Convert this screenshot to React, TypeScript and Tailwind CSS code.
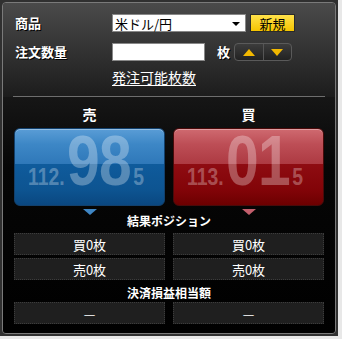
import React from "react";

const JP = { fontFamily: '"Noto Sans CJK JP", "Liberation Sans", sans-serif' };
const NUM = { fontFamily: '"Liberation Sans", Arial, sans-serif' };

function PriceButton({ pre, big, post, side }: { pre: string; big: string; post: string; side: "sell" | "buy" }) {
  const bg =
    side === "sell"
      ? "border-[#12406c] bg-[linear-gradient(to_bottom,#5a9dd6_0%,#3d87c6_20%,#2f78b9_46%,#0f5b9c_46%,#0d5491_80%,#0a4780_100%)]"
      : "border-[#4a0a0a] bg-[linear-gradient(to_bottom,#cf6a70_0%,#bd4e56_20%,#ad3a42_46%,#8f0c12_46%,#820408_80%,#6c0000_100%)]";
  return (
    <div className={`h-[78px] rounded-[6px] border flex justify-center items-start pt-[1px] overflow-hidden shadow-[inset_0_1px_0_rgba(255,255,255,0.35)] ${bg}`}>
      <div className="flex items-baseline scale-x-[0.84] -translate-x-[3px] font-bold text-white/30 leading-none" style={NUM}>
        <span className="text-[23px]">{pre}</span>
        <span className="text-[70px] leading-[0.9] tracking-[-1px] mx-[3px]">{big}</span>
        <span className="text-[23px]">{post}</span>
      </div>
    </div>
  );
}

function ValueBox({ children }: { children: React.ReactNode }) {
  return (
    <div className="h-[22px] bg-[#1f1f1f] border border-dotted border-[#3c3c3c] flex items-center justify-center text-white text-[13px] leading-none">
      {children}
    </div>
  );
}

export default function App() {
  return (
    <div className="w-[342px] h-[339px] bg-[#e8e8e8]" style={JP}>
      <div className="w-[338px] h-[336px] bg-[#303030] p-[2px]">
        <div className="h-full rounded-[4px] border border-[#7a7a7a] overflow-hidden flex flex-col">
          {/* 注文入力エリア */}
          <div className="bg-[linear-gradient(to_bottom,#4a4a4a,#1c1c1c)] pt-[11px]">
            <div className="flex items-center h-[18px]">
              <div className="w-[109px] pl-[12px] text-white text-[13px] font-bold [text-shadow:1px_1px_0_#000]">商品</div>
              <div className="w-[134px] h-[18px] bg-white border border-[#888] flex items-center justify-between pl-[2px] pr-[5px]">
                <span className="text-black text-[13px] leading-none">米ドル/円</span>
                <span className="w-0 h-0 border-l-[4px] border-r-[4px] border-t-[4px] border-l-transparent border-r-transparent border-t-black mt-[2px]" />
              </div>
              <div className="ml-[4px] w-[45px] h-[18px] bg-[linear-gradient(to_bottom,#ffe14a,#f5c400)] border border-[#2a2a2a] flex items-center justify-center text-black text-[13px] leading-none">
                新規
              </div>
            </div>
            <div className="flex items-center h-[18px] mt-[11px]">
              <div className="w-[109px] pl-[12px] text-white text-[13px] font-bold [text-shadow:1px_1px_0_#000]">注文数量</div>
              <div className="w-[93px] h-[18px] bg-white border border-[#888]" />
              <div className="ml-[12px] text-white text-[13px] font-bold [text-shadow:1px_1px_0_#000]">枚</div>
              <div className="ml-[4px] w-[58px] h-[18px] rounded-[4px] border border-[#5a5a5a] bg-[linear-gradient(to_bottom,#3c3c3c,#222)] flex">
                <div className="flex-1 flex items-center justify-center border-r border-[#555]">
                  <span className="w-0 h-0 border-l-[6px] border-r-[6px] border-b-[7px] border-l-transparent border-r-transparent border-b-[#f2b800]" />
                </div>
                <div className="flex-1 flex items-center justify-center">
                  <span className="w-0 h-0 border-l-[6px] border-r-[6px] border-t-[7px] border-l-transparent border-r-transparent border-t-[#f2b800]" />
                </div>
              </div>
            </div>
            <div className="mt-[8px] pl-[109px] h-[16px] text-[14px] leading-[16px]">
              <span className="text-white underline underline-offset-2">発注可能枚数</span>
            </div>
            <div className="mt-[11px] mx-[10px] h-px bg-[#6e6e6e]" />
          </div>

          {/* 売買エリア */}
          <div className="flex-1 bg-[linear-gradient(to_bottom,#161616,#060606_30%,#000)] px-[11px]">
            <div className="grid grid-cols-2 gap-x-[8px] pt-[9px] h-[25px]">
              <div className="text-center text-white text-[14px] leading-[16px] font-bold">売</div>
              <div className="text-center text-white text-[14px] leading-[16px] font-bold">買</div>
            </div>
            <div className="grid grid-cols-2 gap-x-[8px] mt-[6px]">
              <PriceButton side="sell" pre="112." big="98" post="5" />
              <PriceButton side="buy" pre="113." big="01" post="5" />
            </div>
            <div className="grid grid-cols-2 gap-x-[8px] mt-[3px] h-[6px]">
              <div className="flex justify-center">
                <span className="w-0 h-0 border-l-[7px] border-r-[7px] border-t-[6px] border-l-transparent border-r-transparent border-t-[#3f86c4]" />
              </div>
              <div className="flex justify-center">
                <span className="w-0 h-0 border-l-[7px] border-r-[7px] border-t-[6px] border-l-transparent border-r-transparent border-t-[#c25e6c]" />
              </div>
            </div>
            <div className="text-center text-white text-[12px] leading-[14px] font-bold -mt-[1px]">結果ポジション</div>
            <div className="grid grid-cols-2 gap-x-[8px] gap-y-[3px] mt-[5px]">
              <ValueBox>買0枚</ValueBox>
              <ValueBox>買0枚</ValueBox>
              <ValueBox>売0枚</ValueBox>
              <ValueBox>売0枚</ValueBox>
            </div>
            <div className="text-center text-white text-[12px] leading-[14px] font-bold mt-[6px]">決済損益相当額</div>
            <div className="grid grid-cols-2 gap-x-[8px] mt-[2px]">
              <ValueBox>—</ValueBox>
              <ValueBox>—</ValueBox>
            </div>
          </div>
        </div>
      </div>
    </div>
  );
}
